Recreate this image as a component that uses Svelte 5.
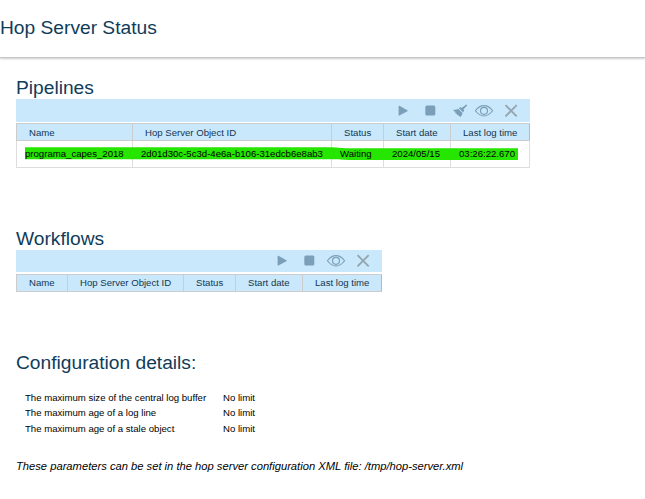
<script>
  const tables = [
    {
      title: 'Pipelines',
      kind: 'pipelines',
      icons: ['play', 'stop', 'clean', 'view', 'close'],
      heads: ['Name', 'Hop Server Object ID', 'Status', 'Start date', 'Last log time'],
      widths: [116, 199, 52, 67, 80],
      rows: [['programa_capes_2018', '2d01d30c-5c3d-4e6a-b106-31edcb6e8ab3', 'Waiting', '2024/05/15', '03:26:22.670']]
    },
    {
      title: 'Workflows',
      kind: 'workflows',
      icons: ['play', 'stop', 'view', 'close'],
      heads: ['Name', 'Hop Server Object ID', 'Status', 'Start date', 'Last log time'],
      widths: [51, 116, 52, 67, 80],
      rows: []
    }
  ];
  const settings = [
    'The maximum size of the central log buffer',
    'The maximum age of a log line',
    'The maximum age of a stale object'
  ];
  const cols = (w) => w.map((n) => n + 'px').join(' ');
</script>

<header><h1>Hop Server Status</h1></header>
<main>
  {#each tables as t}
    <section class={t.kind}>
      <h2>{t.title}</h2>
      <div class="toolbar">
        {#each t.icons as icon}
          <svg class={icon} width="20" height="20" viewBox="0 0 20 20">
            {#if icon === 'play'}
              <path d="M5.6 5.2v9q0 .8.8.4l8-4.4q.8-.5 0-1l-8-4.4q-.8-.4-.8.4z" fill="#7c9fb9" />
            {:else if icon === 'stop'}
              <rect x="5.3" y="4.6" width="10" height="10" rx="1.5" fill="#7c9fb9" />
            {:else if icon === 'clean'}
              <path d="M16.2 3.5q.9 0 .9.9l-3.5 3.9.6 1.8-1.2 1.2-4.1-4.1 1.2-.9 1.9.5zM8.1 7.8l4.5 4.3q-.5 2.2-2 3.8l-1.7-.9-.2-1.2-.6.7-1.4-1 .5-1.2-1.1.6-1-1.3.7-.9-1.3.1-1.5-2.2q3 .6 5.1-.8z" fill="#7c9fb9" />
            {:else if icon === 'view'}
              <g fill="none" stroke="#7c9fb9">
                <path d="M1.4 9.8Q5.2 4.6 10 4.6T18.6 9.8Q14.8 15 10 15T1.4 9.8z" stroke-width="1.1" />
                <circle cx="10" cy="9.8" r="3.5" stroke-width="1.2" />
              </g>
            {:else}
              <path d="M4.5 4.2l11.2 11.2M15.7 4.2L4.5 15.4" fill="none" stroke="#94a5af" stroke-width="1.9" />
            {/if}
          </svg>
        {/each}
      </div>
      <div class="table">
        <div class="row head" style:grid-template-columns={cols(t.widths)}>
          {#each t.heads as h}<div class="cell"><span>{h}</span></div>{/each}
        </div>
        {#each t.rows as row}
          <div class="row body" style:grid-template-columns={cols(t.widths)}>
            {#each row as value}<div class="cell"><span>{value}</span></div>{/each}
            <svg class="marker" width="494" height="14" viewBox="0 0 494 14">
              <path d="M0 0.3H307Q313 1 321 1.2H493V13H325Q319 13 313 12.2H0z" fill="#26e600" />
            </svg>
          </div>
        {/each}
      </div>
    </section>
  {/each}
  <section class="config">
    <h2>Configuration details:</h2>
    <dl>
      {#each settings as s}
        <dt>{s}</dt>
        <dd>No limit</dd>
      {/each}
    </dl>
    <p>These parameters can be set in the hop server configuration XML file: /tmp/hop-server.xml</p>
  </section>
</main>

<style>
  :global(body) {
    margin: 0;
    background: #fff;
    font-family: 'Liberation Sans', Arial, sans-serif;
    font-size: 9.6px;
    color: #000;
  }
  h1, h2, dl, dd, p { margin: 0; }
  h1, h2 {
    font-size: 19.2px;
    font-weight: 400;
    line-height: 22px;
    color: #103c5a;
    white-space: nowrap;
  }
  header {
    box-sizing: border-box;
    height: 58px;
    padding-top: 17px;
    border-bottom: 1px solid #c6c6c6;
    box-shadow: 0 1px 2px #ccc;
  }
  main { padding: 19px 0 0 16px; }
  section { box-sizing: border-box; }
  .pipelines { width: 514px; height: 151px; }
  .workflows { width: 366px; height: 124px; }
  .toolbar {
    display: flex;
    justify-content: flex-end;
    align-items: center;
    box-sizing: border-box;
    height: 23px;
    padding-right: 9px;
    background: #c9e8fb;
  }
  .workflows .toolbar { height: 22px; }
  .toolbar svg { margin-left: 7px; }
  .toolbar .clean { margin-left: 10px; }
  .toolbar .view { margin-left: 4px; }
  .workflows .toolbar .view { margin-left: 7px; }
  .table { margin-top: 1px; }
  .workflows .table { margin-top: 2px; }
  .row { display: grid; position: relative; }
  .cell {
    display: flex;
    align-items: center;
    box-sizing: border-box;
    border-left: 1px solid #ccc;
    padding-left: 12px;
    white-space: nowrap;
  }
  .cell span { position: relative; z-index: 1; }
  .cell:nth-child(5) { border-right: 1px solid #ccc; }
  .head {
    height: 18px;
    box-sizing: border-box;
    border-top: 1px solid #ccc;
    border-bottom: 1px solid #ccc;
    background: #c9e8fb;
    color: #123652;
  }
  .head .cell:nth-child(5) { border-right-color: #9fc0d8; }
  .workflows .head .cell { padding-bottom: 2px; }
  .body { height: 27px; box-sizing: border-box; border-bottom: 1px solid #ddd; }
  .body .cell { padding: 0 0 2px 8px; border-color: #ddd; }
  .marker { position: absolute; left: 9px; top: 6px; }
  dl {
    display: grid;
    grid-template-columns: 198px auto;
    grid-template-rows: 15px 16px 15px;
    line-height: 15px;
    padding: 16px 0 0 9px;
  }
  p { margin-top: 22.5px; font-size: 11.2px; line-height: 14px; font-style: italic; white-space: nowrap; }
</style>
